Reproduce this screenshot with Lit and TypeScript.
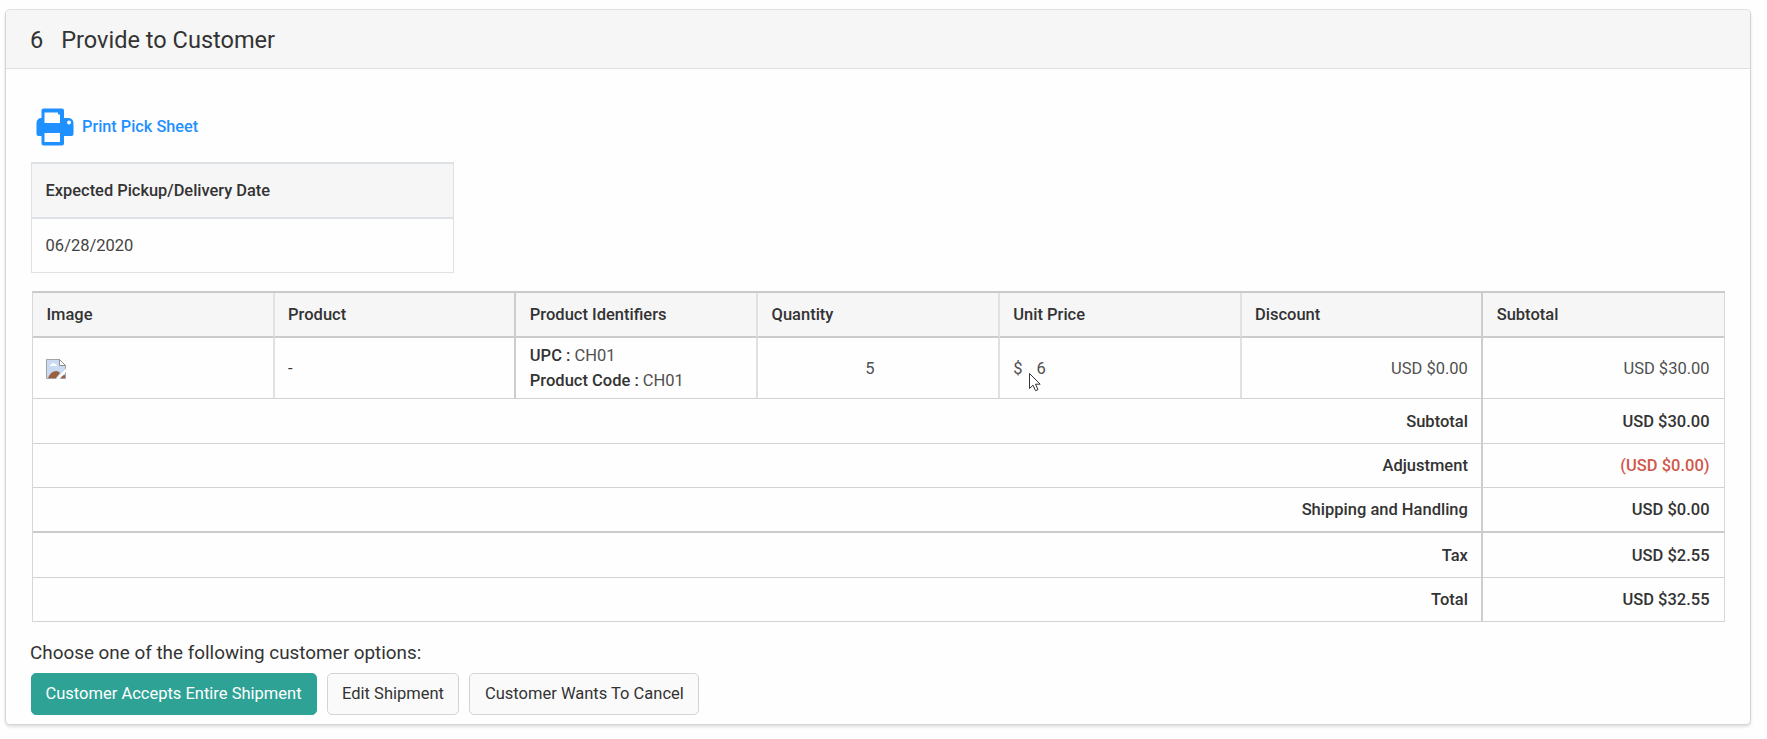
import { LitElement, html, css } from "lit";
import { customElement } from "lit/decorators.js";

const HEADERS = ["Image", "Product", "Product Identifiers", "Quantity", "Unit Price", "Discount", "Subtotal"];

const TOTALS = [
  { label: "Subtotal", value: "USD $30.00", cls: "" },
  { label: "Adjustment", value: "(USD $0.00)", cls: "negative" },
  { label: "Shipping and Handling", value: "USD $0.00", cls: "heavy" },
  { label: "Tax", value: "USD $2.55", cls: "" },
  { label: "Total", value: "USD $32.55", cls: "" },
];

@customElement("app-root")
export class AppRoot extends LitElement {
  static styles = css`
    :host {
      display: block;
      box-sizing: border-box;
      height: 739px;
      padding: 9px 16px 0 5px;
      background: #fefefe;
      color: #333;
      font: 400 16.5px/24px Roboto, sans-serif;
    }
    * { box-sizing: border-box; }
    .card {
      height: 716px;
      border: 1px solid #d3d5d5;
      border-top-color: #e0e0e0;
      border-radius: 5px;
      background: #fefefe;
      box-shadow: 0 2px 3px rgba(0, 0, 0, 0.12);
    }
    .head {
      display: flex;
      align-items: center;
      gap: 18px;
      height: 59px;
      padding: 1px 0 0 24px;
      background: #f6f6f6;
      border-bottom: 1px solid #dfe0e0;
      border-radius: 4px 4px 0 0;
      font-size: 23.55px;
    }
    .body { padding: 38px 25px 0 25px; }
    .print {
      display: flex;
      align-items: center;
      gap: 8px;
      height: 40px;
      padding-left: 5px;
      color: #1e90ff;
      font-size: 16.3px;
      font-weight: 500;
    }
    .print svg { display: block; }
    .date {
      width: 423px;
      height: 111px;
      margin-top: 15px;
      border: 1px solid #dee2e6;
      border-top-width: 2px;
    }
    .date div { display: flex; align-items: center; padding-left: 13.6px; }
    .date .label { height: 55px; background: #f6f6f6; border-bottom: 2px solid #dee2e6; font-size: 16.4px; font-weight: 500; }
    .date .value { height: 54px; color: #444; }
    .table {
      display: grid;
      grid-template-columns: repeat(7, minmax(0, 1fr));
      grid-template-rows: 45px 61px 45px 44px 45px 45px 44px;
      width: 1693px;
      margin: 18px 0 0 1px;
      border-top: 2px solid #cbcbcb;
      border-left: 1px solid #d8d8d8;
    }
    .cell {
      display: flex;
      align-items: center;
      padding: 1px 13.4px 0;
      border-right: 2px solid #e1e1e1;
      border-bottom: 1px solid #d2d2d2;
    }
    .cell.dark { border-right-color: #cdcdcd; }
    .cell.last { border-right: 1px solid #d8d8d8; padding-right: 14.4px; }
    .th { padding-top: 0; background: #f6f6f6; border-bottom: 2px solid #cbcbcb; font-weight: 500; }
    .right { justify-content: flex-end; }
    .light { color: #505050; }
    .strong { font-weight: 500; }
    .span { grid-column: span 6; }
    .ids { flex-direction: column; align-items: flex-start; justify-content: center; color: #505050; line-height: 24.5px; }
    .ids b { font-weight: 500; color: #333; }
    .center { justify-content: center; padding-left: 0; padding-right: 16px; }
    .negative { color: #d0584c; }
    .heavy { border-bottom: 2px solid #cbcbcb; }
    .price { gap: 14px; position: relative; }
    .cursor { position: absolute; left: 28px; top: 34px; }
    .prompt { margin: 19px 0 0 -1px; font-size: 18.87px; }
    .buttons { display: flex; gap: 10px; margin: 8px 0 0 -0.5px; }
    .btn {
      height: 42px;
      padding: 0 14.5px;
      border: 1px solid #d3d4d4;
      border-radius: 5px;
      background: #fafafa;
      color: #333;
      font: inherit;
      white-space: nowrap;
    }
    .btn.primary { padding: 0 14px; background: #2ea295; border-color: #2ea295; color: #fff; }
  `;

  private printer() {
    return html`<svg width="38" height="38" viewBox="0 0 38 38">
      <path fill="#1e90ff" fill-rule="evenodd" d="M7.500 .5h18.500q2 0 2 2v7.500h4q5.500 0 5.500 5.500v10.500q0 2-2 2h-7.500v7.500q0 2-2 2h-18.500q-2 0-2-2v-7.500h-3q-2 0-2-2v-10.500q0-5.500 5-5.500v-7.500q0-2 2-2z"/>
      <path fill="#fefefe" d="M8.500 4.500h13.500v2h2v8.500h-15.500zM8.500 25h15.500v9h-15.500z"/>
      <circle cx="33" cy="14.500" r="2" fill="#fefefe"/>
    </svg>`;
  }

  private brokenImage() {
    return html`<svg width="20" height="20" viewBox="0 0 20 20">
      <path fill="#c9dbf3" stroke="#a0a3a5" d="M.5.500h13l6 6v13h-19z"/>
      <path fill="#fff" d="M4 7q0-2 2-2 1-2 3 0 2 0 2 2z"/>
      <path fill="#9a6040" d="M2 19q3-7 8-7 3 0 4 2l-4 5zM14 19q1-3 5-3v3z"/>
      <path fill="#fff" stroke="#8c8f90" d="M13.500.500v6h6z"/>
      <path fill="#fefefe" d="M20 9.500v3.500l-6.500 7h-3.500z"/>
    </svg>`;
  }

  private cursor() {
    return html`<svg class="cursor" width="14" height="21" viewBox="0 0 14 21">
      <path fill="#fff" stroke="#333" d="M1.500 1.500v15l3.500-3.300 2.500 5.500 2.500-1.100-2.500-5.400h4.700z"/>
    </svg>`;
  }

  render() {
    return html`
      <section class="card">
        <header class="head"><span>6</span><span>Provide to Customer</span></header>
        <div class="body">
          <div class="print">${this.printer()}<span>Print Pick Sheet</span></div>
          <div class="date">
            <div class="label">Expected Pickup/Delivery Date</div>
            <div class="value">06/28/2020</div>
          </div>
          <div class="table">
            ${HEADERS.map((h, i) => html`<div class="cell th ${i === 1 || i === 5 ? "dark" : ""} ${i === 6 ? "last" : ""}">${h}</div>`)}
            <div class="cell">${this.brokenImage()}</div>
            <div class="cell dark">-</div>
            <div class="cell ids"><span><b>UPC :</b> CH01</span><span><b>Product Code :</b> CH01</span></div>
            <div class="cell center light">5</div>
            <div class="cell price light"><span>$</span><span>6</span>${this.cursor()}</div>
            <div class="cell right dark light">USD $0.00</div>
            <div class="cell right last light">USD $30.00</div>
            ${TOTALS.map((t) => html`
              <div class="cell right span dark strong ${t.cls === "heavy" ? "heavy" : ""}">${t.label}</div>
              <div class="cell right last strong ${t.cls}">${t.value}</div>`)}
          </div>
          <div class="prompt">Choose one of the following customer options:</div>
          <div class="buttons">
            <button class="btn primary">Customer Accepts Entire Shipment</button>
            <button class="btn">Edit Shipment</button>
            <button class="btn">Customer Wants To Cancel</button>
          </div>
        </div>
      </section>`;
  }
}
